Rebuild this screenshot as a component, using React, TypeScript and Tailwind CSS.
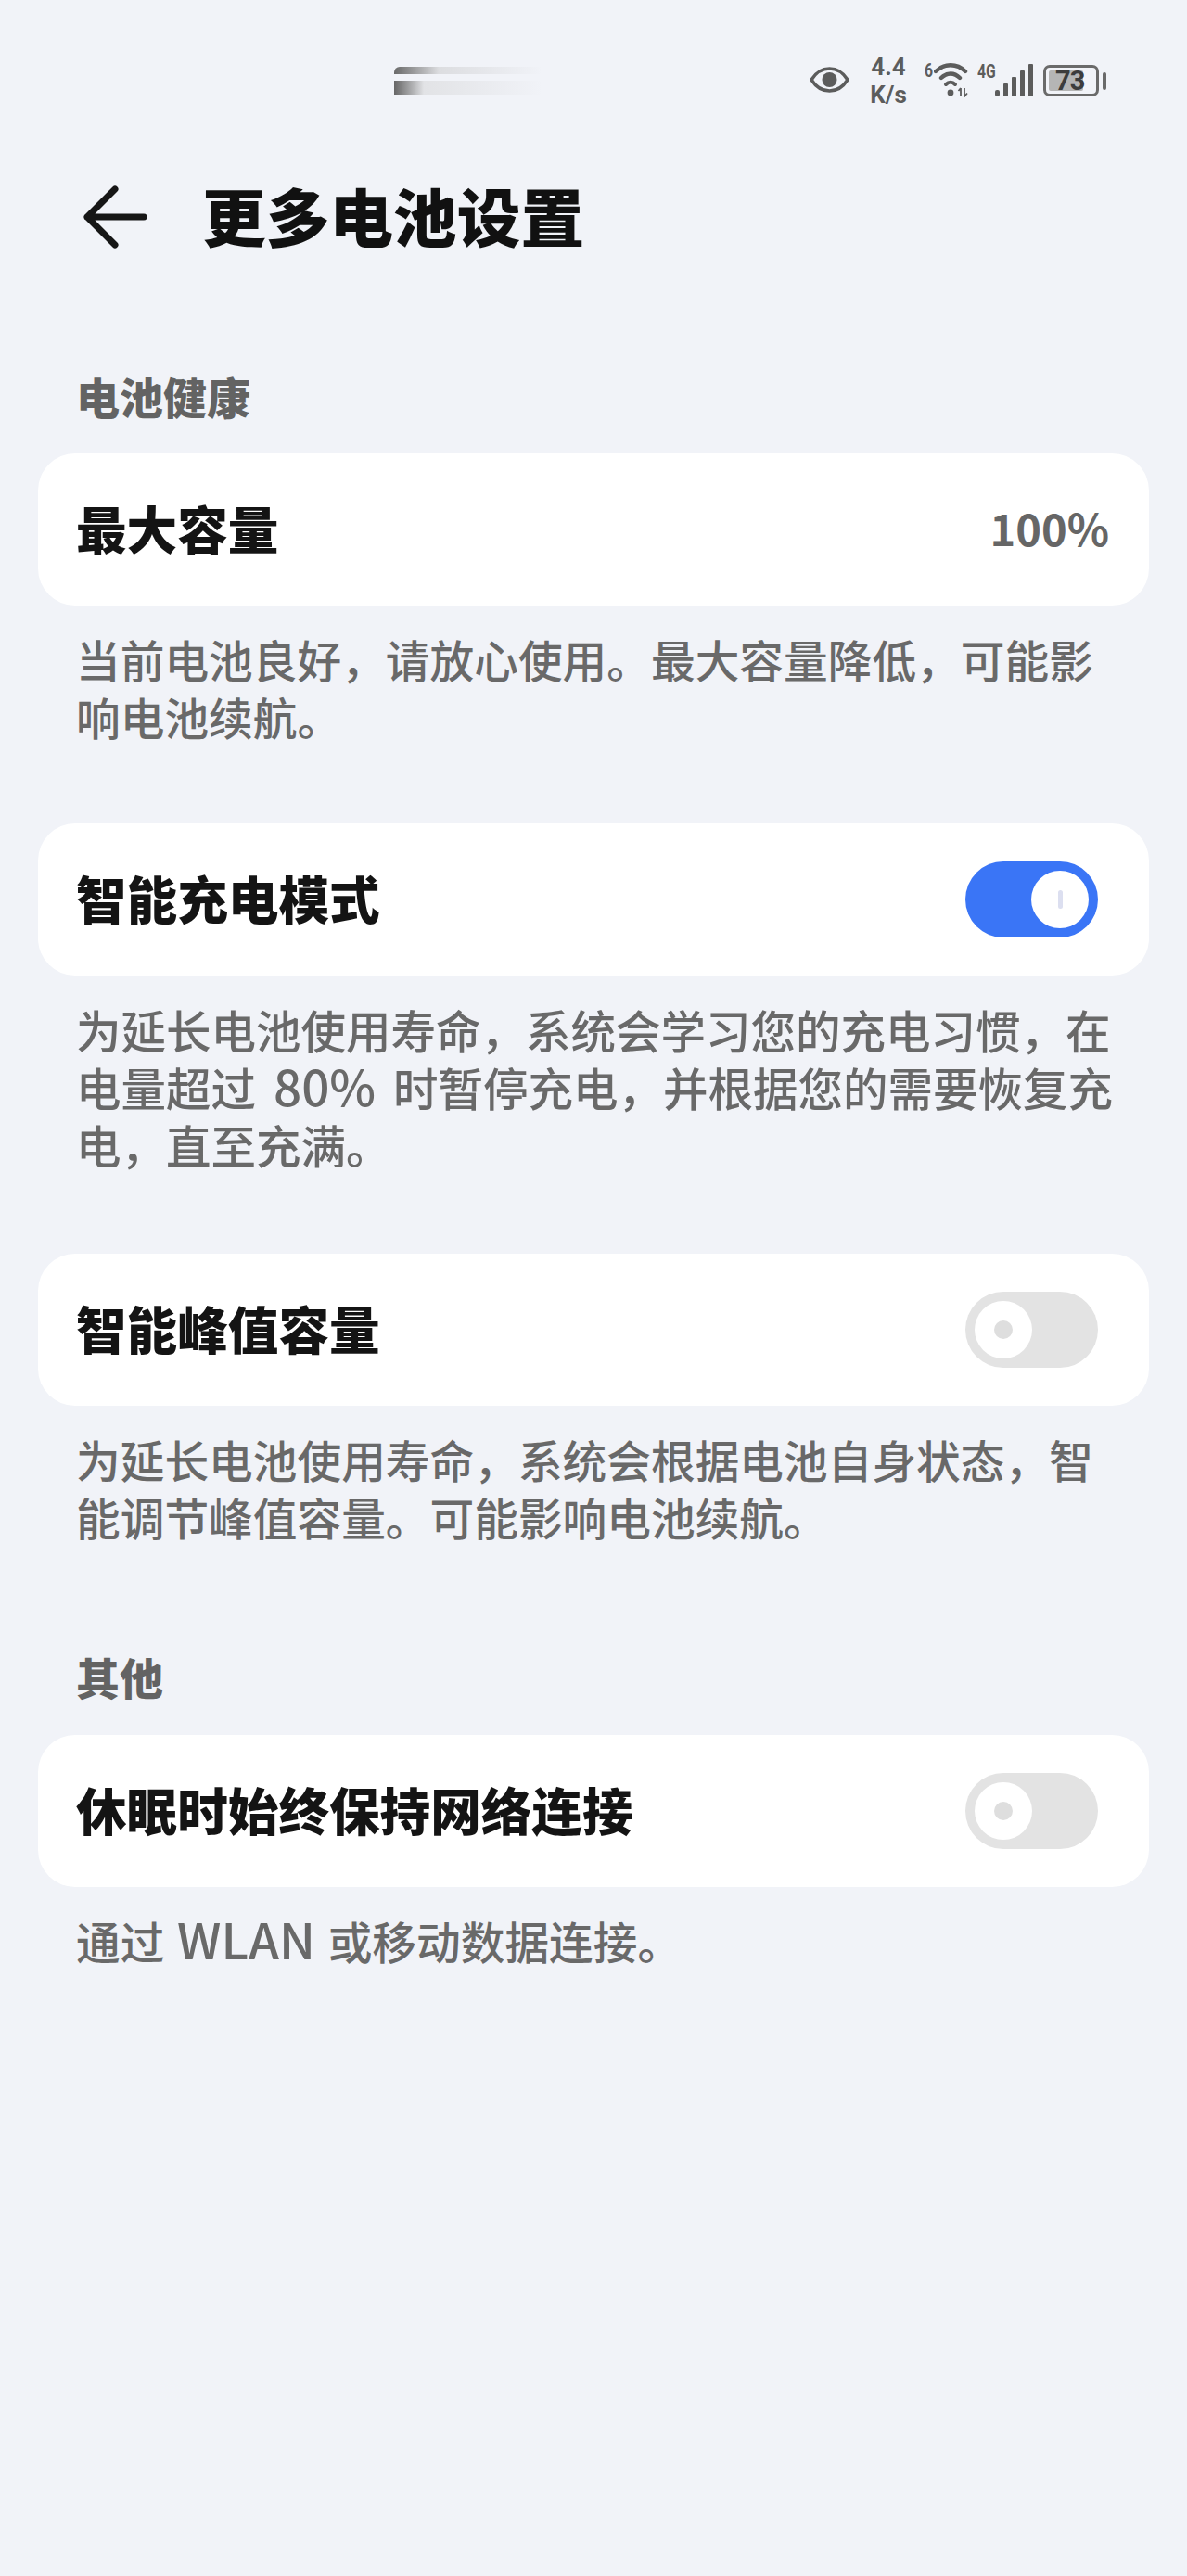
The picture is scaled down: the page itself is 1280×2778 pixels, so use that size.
const cjk = "font-['Noto_Sans_CJK_SC','Noto_Sans',sans-serif]";

function Toggle({ on }: { on: boolean }) {
  if (on) {
    return (
      <div className="flex h-[82px] w-[143px] items-center justify-end rounded-full bg-[#3a75f6] pr-[10px]">
        <div className="flex h-[62px] w-[62px] items-center justify-center rounded-full bg-white">
          <div className="h-[20px] w-[5px] rounded-full bg-[#dcdff0]"></div>
        </div>
      </div>
    );
  }
  return (
    <div className="flex h-[82px] w-[143px] items-center rounded-full bg-[#e3e3e3] pl-[10px]">
      <div className="flex h-[62px] w-[62px] items-center justify-center rounded-full bg-white">
        <div className="h-[20px] w-[20px] rounded-full bg-[#dedede]"></div>
      </div>
    </div>
  );
}

function Row({ title, children }: { title: string; children: React.ReactNode }) {
  return (
    <div className="flex h-[164px] items-center justify-between rounded-[40px] bg-white pl-[41px] pr-[55px]">
      <span className="pb-[5px] text-[54.6px] leading-[64px] font-black text-[#141414]">{title}</span>
      {children}
    </div>
  );
}

function Desc({ wide, children }: { wide?: boolean; children: React.ReactNode }) {
  return (
    <p
      className={`mt-[27px] pl-[41px] leading-[62px] font-medium whitespace-nowrap text-[#696969] ${
        wide ? 'text-[48.5px] [word-spacing:8px]' : 'text-[47.7px] [word-spacing:3px]'
      }`}
    >
      {children}
    </p>
  );
}

function Latin({ children }: { children: React.ReactNode }) {
  return <span className="text-[53px] leading-[50px]">{children}</span>;
}

function SectionLabel({ children }: { children: React.ReactNode }) {
  return <div className="pl-[41px] text-[47px] leading-[63px] font-black text-[#636363]">{children}</div>;
}

function StatusBar() {
  return (
    <div className="flex h-[179px] items-start justify-between">
      {/* 通知がぼかされた部分 */}
      <div className="mt-[72px] ml-[425px] flex w-[160px] flex-col gap-[7px]">
        <div className="h-[8px] rounded-tl-[6px] bg-gradient-to-r from-[#6a6a6a] via-[#dcdde0] via-30% to-[#f1f3f8]"></div>
        <div className="h-[15px] bg-gradient-to-r from-[#666666] via-[#e2e3e6] via-20% to-[#f1f3f8]"></div>
      </div>

      <div className="relative mt-[60px] mr-[87px] h-[56px] w-[320px] text-[#5c5c5c]">
        <svg className="absolute top-[12px] left-0 h-[28px] w-[43px]" viewBox="0 0 43 28" fill="none">
          <path d="M2 14C7 6 14 2 21.5 2S36 6 41 14C36 22 29 26 21.5 26S7 22 2 14Z" stroke="#5c5c5c" strokeWidth="3.5" />
          <circle cx="21.5" cy="14" r="8" fill="#5c5c5c" />
        </svg>
        <div className="absolute top-[-3px] left-[63px] w-[44px] text-center font-['Roboto',sans-serif] text-[26px] leading-[30px] font-bold">
          4.4
          <br />
          K/s
        </div>
        <span className="absolute top-[5px] left-[124px] origin-left scale-x-75 font-['Roboto',sans-serif] text-[21px] leading-[22px] font-bold">
          6
        </span>
        <svg className="absolute top-[7px] left-[134px] h-[38px] w-[38px]" viewBox="0 0 38 38" fill="none">
          <path d="M2 10C11 1 25 1 34 10" stroke="#5c5c5c" strokeWidth="4.4" strokeLinecap="round" />
          <path d="M8 17C14 11 22 11 28 17" stroke="#5c5c5c" strokeWidth="4.4" strokeLinecap="round" />
          <path d="M13 24C16 21 20 21 23 24" stroke="#5c5c5c" strokeWidth="4" strokeLinecap="round" />
          <circle cx="18" cy="33" r="3.4" fill="#5c5c5c" />
          <path d="M29 28V37M26.5 31L29 28M33 28V37L36 33.5" stroke="#5c5c5c" strokeWidth="1.8" />
        </svg>
        <span className="absolute top-[6px] left-[181px] origin-left scale-x-75 font-['Roboto',sans-serif] text-[21px] leading-[22px] font-bold">
          4G
        </span>
        <div className="absolute top-[9px] left-[200px] flex h-[35px] items-end gap-[4px]">
          <div className="h-[7px] w-[5px] rounded-[2px] bg-[#5c5c5c]"></div>
          <div className="h-[14px] w-[5px] rounded-[1px] bg-[#5c5c5c]"></div>
          <div className="h-[21px] w-[5px] rounded-[1px] bg-[#5c5c5c]"></div>
          <div className="h-[28px] w-[5px] rounded-[1px] bg-[#5c5c5c]"></div>
          <div className="h-[35px] w-[5px] rounded-[1px] bg-[#5c5c5c]"></div>
        </div>
        <div className="absolute top-[10px] left-[252px] flex h-[34px] w-[60px] items-center rounded-[7px] border-[3px] border-[#6a6a6a] p-[3px]">
          <div className="h-full w-[37px] rounded-[2px] bg-[#b5b5b5]"></div>
          <span className="absolute top-[-1px] left-[10px] font-['Roboto',sans-serif] text-[29px] leading-[30px] font-bold tracking-[-1px] text-[#3c3c3c]">
            73
          </span>
        </div>
        <div className="absolute top-[18px] left-[316px] h-[19px] w-[4px] rounded-full bg-[#6a6a6a]"></div>
      </div>
    </div>
  );
}

export default function App() {
  return (
    <div className={`${cjk} h-[2778px] w-[1280px] overflow-hidden bg-[#f1f3f8]`}>
      <StatusBar />

      <div className="flex h-[110px] items-center pl-[90px]">
        <svg className="h-[68px] w-[68px]" viewBox="0 0 68 68" fill="none">
          <path d="M34 4L4 34L34 64M4 34H65" stroke="#161616" strokeWidth="7" strokeLinecap="round" strokeLinejoin="round" />
        </svg>
        <h1 className="ml-[60px] pb-[7px] text-[68.7px] leading-[80px] font-black text-[#111111]">更多电池设置</h1>
      </div>

      <div className="mx-[41px] mt-[106px]">
        <SectionLabel>电池健康</SectionLabel>
        <div className="mt-[31px]">
          <Row title="最大容量">
            <span className="-mr-[12px] pb-[4px] text-[47px] leading-[60px] font-bold text-[#666666]">100%</span>
          </Row>
        </div>
        <Desc>
          当前电池良好，请放心使用。最大容量降低，可能影
          <br />
          响电池续航。
        </Desc>

        <div className="mt-[84px]">
          <Row title="智能充电模式">
            <Toggle on />
          </Row>
        </div>
        <Desc wide>
          为延长电池使用寿命，系统会学习您的充电习惯，在
          <br />
          电量超过 <Latin>80%</Latin> 时暂停充电，并根据您的需要恢复充
          <br />
          电，直至充满。
        </Desc>

        <div className="mt-[87px]">
          <Row title="智能峰值容量">
            <Toggle on={false} />
          </Row>
        </div>
        <Desc>
          为延长电池使用寿命，系统会根据电池自身状态，智
          <br />
          能调节峰值容量。可能影响电池续航。
        </Desc>

        <div className="mt-[109px]">
          <SectionLabel>其他</SectionLabel>
        </div>
        <div className="mt-[32px]">
          <Row title="休眠时始终保持网络连接">
            <Toggle on={false} />
          </Row>
        </div>
        <Desc>
          通过 <Latin>WLAN</Latin> 或移动数据连接。
        </Desc>
      </div>
    </div>
  );
}
